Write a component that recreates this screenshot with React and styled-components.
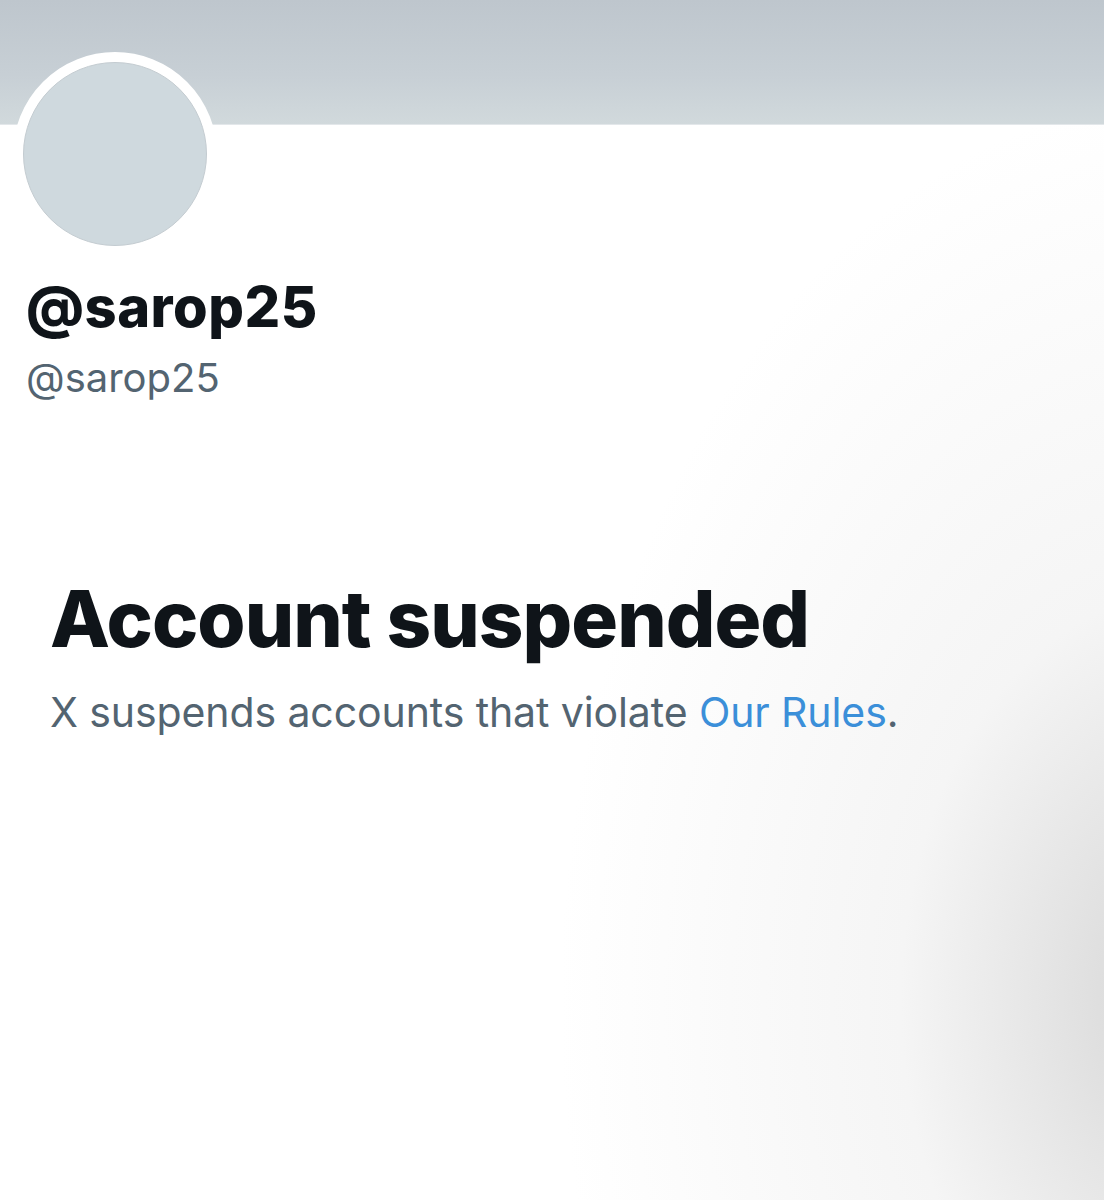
import styled, { createGlobalStyle } from "styled-components";

const GlobalStyle = createGlobalStyle`
    html, body {
        margin: 0;
        padding: 0;
        background: #ffffff;
    }
    body {
        font-family: Inter, "Noto Sans", "Liberation Sans", sans-serif;
        -webkit-font-smoothing: antialiased;
    }
`;

export default function App() {
    return (
        <Page>
            <GlobalStyle />
            <Banner />
            <ProfileHead>
                <Avatar>
                    <AvatarInner />
                </Avatar>
                <DisplayName>@sarop25</DisplayName>
                <Handle>@sarop25</Handle>
            </ProfileHead>
            <Notice>
                <NoticeTitle>Account suspended</NoticeTitle>
                <NoticeText>
                    X suspends accounts that violate <RulesLink href="#">Our Rules</RulesLink>.
                </NoticeText>
            </Notice>
        </Page>
    );
}

const Page = styled.div`
    width: 1104px;
    height: 1200px;
    overflow: hidden;
    background:
        radial-gradient(ellipse 620px 900px at 1180px 1000px, rgba(200, 200, 200, 0.75) 0%, rgba(230, 230, 230, 0.4) 45%, rgba(255, 255, 255, 0) 100%),
        #ffffff;
`;

const Banner = styled.div`
    height: 124px;
    background: linear-gradient(180deg, #bec6cd 0%, #c7cfd5 60%, #d1d9dc 100%);
    border-bottom: 1px solid #e3e7ea;
`;

const ProfileHead = styled.div`
    display: flex;
    flex-direction: column;
    align-items: flex-start;
    padding-left: 13px;
`;

const Avatar = styled.div`
    width: 184px;
    height: 184px;
    margin-top: -73px;
    border: 10px solid #ffffff;
    border-radius: 50%;
    background: #ffffff;
`;

const AvatarInner = styled.div`
    width: 100%;
    height: 100%;
    box-sizing: border-box;
    border-radius: 50%;
    background: #cfd9de;
    border: 1px solid #c4ccd1;
`;

const DisplayName = styled.h1`
    margin: 20px 0 0 13px;
    font-size: 56px;
    line-height: 62px;
    font-weight: 800;
    letter-spacing: 0.5px;
    color: #0f1419;
`;

const Handle = styled.div`
    margin: 16px 0 0 13px;
    font-size: 40px;
    line-height: 48px;
    font-weight: 400;
    color: #536471;
`;

const Notice = styled.div`
    padding: 171px 0 0 50px;
`;

const NoticeTitle = styled.h2`
    margin: 0;
    font-size: 78px;
    line-height: 92px;
    font-weight: 800;
    letter-spacing: -1px;
    color: #0f1419;
`;

const NoticeText = styled.p`
    margin: 23px 0 0;
    font-size: 41px;
    line-height: 48px;
    font-weight: 400;
    letter-spacing: -0.1px;
    color: #536471;
`;

const RulesLink = styled.a`
    color: #3b8fd9;
    text-decoration: none;
`;
